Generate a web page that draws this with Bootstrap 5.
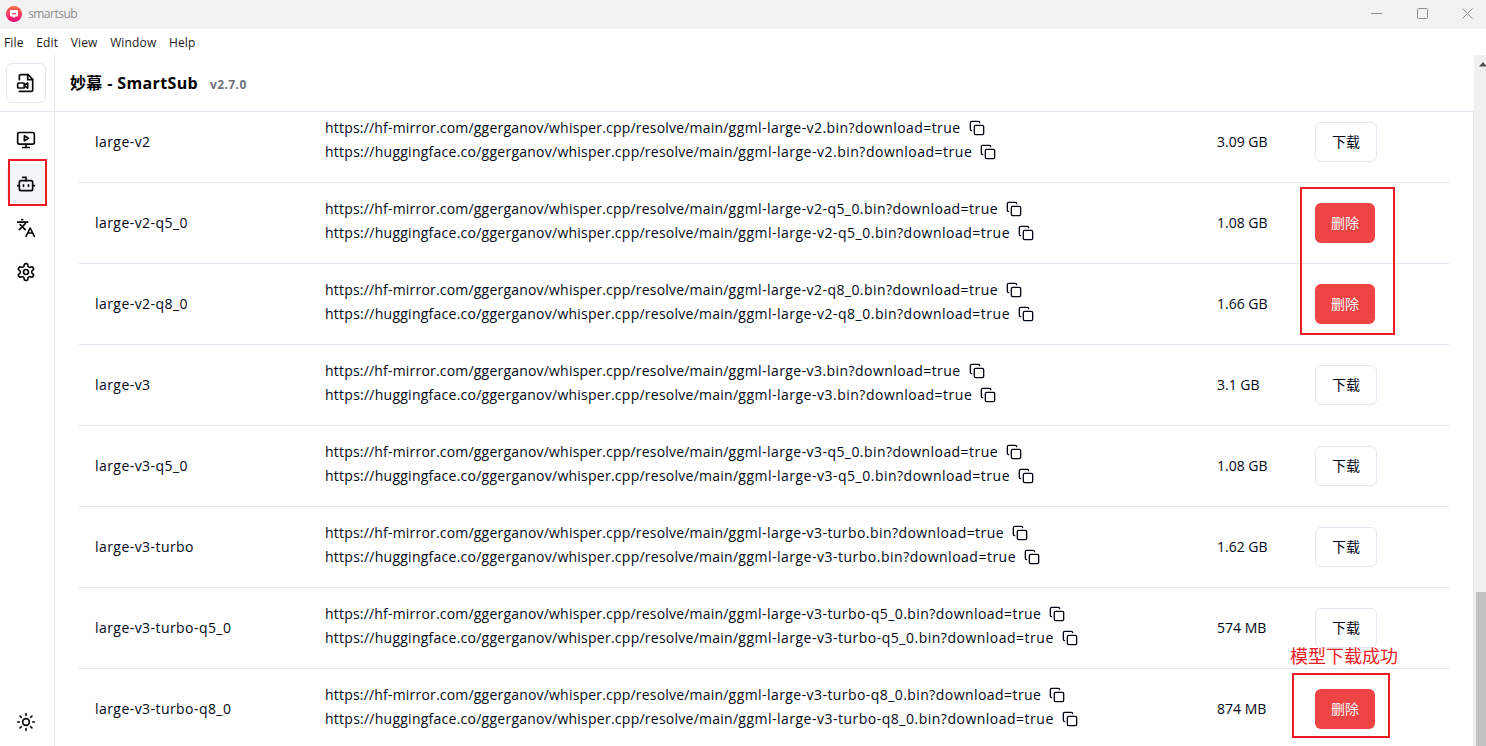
<!DOCTYPE html>
<html lang="zh">
<head>
  <meta charset="UTF-8">
  <title>smartsub</title>
  <meta name="viewport" content="width=device-width, initial-scale=1" />
  <link href="https://cdn.jsdelivr.net/npm/bootstrap@5.3.0/dist/css/bootstrap.min.css" rel="stylesheet" />
  <style>
    body {
      font-family: "Open Sans", "Noto Sans CJK SC", sans-serif;
      font-size: 14px;
      color: #020817;
    }
    svg { display: block; flex: none; }
    .lu { fill: none; stroke: currentColor; stroke-width: 2; stroke-linecap: round; stroke-linejoin: round; }
    .title-bar { height: 29px; background: #f2f2f2; color: #8c8c8c; font-size: 12px; padding: 0 0 2px 6px; }
    .title-bar .app-name { margin-left: 6px; letter-spacing: -.5px; }
    .win-group { margin-right: -4.500px; }
    .title-bar .win-btn { width: 45.500px; display: flex; justify-content: center; }
    .menu-bar { height: 26px; font-size: 12px; color: #1a1a1a; padding: 2px 0 0 4px; gap: 12.600px; letter-spacing: .15px; }
    .side-bar { width: 55px; border-right: 1px solid #e2e8f0; }
    .side-logo { height: 57px; border-bottom: 1px solid #e2e8f0; padding: 8px 8px 8px 6px; }
    .logo-btn { width: 40px; height: 40px; border: 1px solid #e2e8f0; border-radius: 6px; color: #09090b; }
    .side-btn { width: 40px; height: 40px; border-radius: 8px; color: #09090b; }
    .side-btn.current { background: #f1f5f9; }
    .side-nav { padding: 8px 0 0 6px; gap: 4px; }
    .theme-btn { margin: 0 0 4px 6px; }
    .page-head { height: 56px; padding: 2px 0 0 15px; gap: 12px; }
    .page-head h1 { font-size: 16px; letter-spacing: .36px; color: #000; }
    .page-head .version { font-size: 12px; color: #71717a; letter-spacing: .4px; padding-top: 1px; }
    .page-body { border-top: 1px solid #e2e8f0; border-right: 1px solid #e2e8f0; padding: 0 24px; }
    .model-table { margin-top: -10px; table-layout: fixed; border-collapse: separate; border-spacing: 0; line-height: 24px; }
    .model-table td { height: 81px; padding: 0 16px; border-bottom: 1px solid #e2e8f0; }
    .model-name { letter-spacing: .44px; }
    .model-url { height: 24px; letter-spacing: .195px; }
    .model-url .url-file { letter-spacing: .435px; margin-right: 8px; }
    .model-url + .model-url { letter-spacing: .25px; }
    .model-url + .model-url .url-file { letter-spacing: .5px; }
    .url-list { padding-bottom: 4px; }
    .btn-model { height: 40px; width: 60px; padding: 0 0 2px; border-radius: 6px; font-size: 14px; }
    .btn-get { width: 62px; border: 1px solid #e2e8f0; color: #020817; background: #fff; }
    .btn-del { background: #ef4444; color: #f8fafc; border: 0; }
    .scroll-track { width: 12px; background: #f0f0f0; padding-left: 2px; }
    .scroll-thumb { margin-top: 537px; background: #c1c1c1; }
    .note-box { position: absolute; border: 2px solid #ed1c24; z-index: 5; pointer-events: none; }
    .note-text { position: absolute; color: #ed1c24; font-size: 18px; line-height: 24px; z-index: 5; white-space: nowrap; }
    .note-nav { left: 8px; top: 159px; width: 39px; height: 47px; }
    .note-pair { left: 1300px; top: 187px; width: 95px; height: 148px; }
    .note-last { left: 1292px; top: 673px; width: 98px; height: 65px; }
    .note-text { left: 1290px; top: 644px; }
    .scroll-up { position: absolute; left: 1479px; top: 62px; }
  </style>
</head>
<body class="vh-100 overflow-hidden d-flex flex-column position-relative bg-white">

<!-- Window title bar -->
<div class="title-bar d-flex align-items-center flex-shrink-0">
  <svg width="16" height="16" viewBox="0 0 16 16">
    <defs><linearGradient id="g" x1="0" y1="0" x2="0" y2="1"><stop offset="0" stop-color="#ff7045"/><stop offset="1" stop-color="#f8077c"/></linearGradient></defs>
    <circle cx="8" cy="8" r="8" fill="url(#g)"/>
    <path d="M5 4h6a1 1 0 0 1 1 1v4.500a1 1 0 0 1-1 1H9.500L8 12l-1.500-1.500H5a1 1 0 0 1-1-1V5a1 1 0 0 1 1-1z" fill="#fff"/>
    <path d="M6 7.700h4" stroke="#fb3564" stroke-width="1.200"/>
  </svg>
  <span class="app-name">smartsub</span>
  <div class="ms-auto d-flex win-group">
    <div class="win-btn"><svg width="11" height="11" viewBox="0 0 11 11"><path d="M0 5.500h11" stroke="#8c8c8c"/></svg></div>
    <div class="win-btn"><svg width="11" height="11" viewBox="0 0 11 11"><rect x=".5" y=".5" width="10" height="10" rx="1" fill="none" stroke="#8c8c8c"/></svg></div>
    <div class="win-btn"><svg width="11" height="11" viewBox="0 0 11 11"><path d="M.5.5l10 10M10.500.5l-10 10" stroke="#8c8c8c"/></svg></div>
  </div>
</div>

<div class="menu-bar d-flex align-items-center flex-shrink-0">
  <span>File</span><span>Edit</span><span>View</span><span>Window</span><span>Help</span>
</div>

<div class="d-flex flex-grow-1 overflow-hidden">
  <!-- Sidebar -->
  <aside class="side-bar d-flex flex-column flex-shrink-0">
    <div class="side-logo">
      <div class="logo-btn d-flex align-items-center justify-content-center">
        <svg class="lu" width="20" height="20" viewBox="0 0 24 24"><path d="M4 8V4a2 2 0 0 1 2-2h8.500L20 7.500V20a2 2 0 0 1-2 2H4"/><path d="M14 2v6h6"/><path d="m10 15.500 4 2.500v-6l-4 2.500"/><rect width="8" height="6" x="2" y="12" rx="1"/></svg>
      </div>
    </div>
    <nav class="side-nav d-flex flex-column">
      <a class="side-btn d-flex align-items-center justify-content-center"><svg class="lu" width="20" height="20" viewBox="0 0 24 24"><path d="m10 7 5 3-5 3Z"/><rect width="20" height="14" x="2" y="3" rx="2"/><path d="M12 17v4M8 21h8"/></svg></a>
      <a class="side-btn current d-flex align-items-center justify-content-center"><svg class="lu" width="20" height="20" viewBox="0 0 24 24"><path d="M12 8V4H8"/><rect width="16" height="12" x="4" y="8" rx="2"/><path d="M2 14h2M20 14h2M15 13v2M9 13v2"/></svg></a>
      <a class="side-btn d-flex align-items-center justify-content-center"><svg class="lu" width="20" height="20" viewBox="0 0 24 24"><path d="m5 8 6 6M4 14l6-6 2-3M2 5h12M7 2h1M22 22l-5-10-5 10M14 18h6"/></svg></a>
      <a class="side-btn d-flex align-items-center justify-content-center"><svg class="lu" width="20" height="20" viewBox="0 0 24 24"><path d="M12.220 2h-.44a2 2 0 0 0-2 2v.18a2 2 0 0 1-1 1.730l-.43.25a2 2 0 0 1-2 0l-.15-.08a2 2 0 0 0-2.730.73l-.22.38a2 2 0 0 0 .73 2.730l.15.1a2 2 0 0 1 1 1.720v.51a2 2 0 0 1-1 1.740l-.15.09a2 2 0 0 0-.73 2.730l.22.38a2 2 0 0 0 2.730.73l.15-.08a2 2 0 0 1 2 0l.43.25a2 2 0 0 1 1 1.730V20a2 2 0 0 0 2 2h.44a2 2 0 0 0 2-2v-.18a2 2 0 0 1 1-1.730l.43-.25a2 2 0 0 1 2 0l.15.08a2 2 0 0 0 2.730-.73l.22-.39a2 2 0 0 0-.73-2.730l-.15-.08a2 2 0 0 1-1-1.740v-.5a2 2 0 0 1 1-1.740l.15-.09a2 2 0 0 0 .73-2.730l-.22-.38a2 2 0 0 0-2.730-.73l-.15.08a2 2 0 0 1-2 0l-.43-.25a2 2 0 0 1-1-1.730V4a2 2 0 0 0-2-2z"/><circle cx="12" cy="12" r="3"/></svg></a>
    </nav>
    <a class="side-btn theme-btn mt-auto d-flex align-items-center justify-content-center"><svg class="lu" width="20" height="20" viewBox="0 0 24 24"><circle cx="12" cy="12" r="4"/><path d="M12 2v2M12 20v2M4.930 4.930l1.410 1.410M17.660 17.660l1.410 1.410M2 12h2M20 12h2M6.340 17.660l-1.410 1.410M19.070 4.930l-1.410 1.410"/></svg></a>
  </aside>

  <!-- Models -->
  <main class="flex-grow-1 d-flex flex-column overflow-hidden">
    <header class="page-head d-flex align-items-center flex-shrink-0">
      <h1 class="fw-bold mb-0">妙幕 - SmartSub</h1>
      <span class="version fw-bold">v2.7.0</span>
    </header>
    <div class="page-body flex-grow-1 overflow-hidden">
      <table class="model-table w-100 align-middle">
        <colgroup><col style="width: 230px"><col style="width: 892px"><col style="width: 98px"><col></colgroup>
        <tbody id="modelRows"></tbody>
      </table>
    </div>
  </main>
  <div class="scroll-track d-flex flex-column flex-shrink-0"><div class="scroll-thumb flex-grow-1"></div></div>
</div>

<svg class="scroll-up" width="9" height="5" viewBox="0 0 9 5"><path d="M0 4.500 4 0l4 4.500z" fill="#505050"/></svg>

<!-- Red annotations -->
<div class="note-box note-nav"></div>
<div class="note-box note-pair"></div>
<div class="note-text">模型下载成功</div>
<div class="note-box note-last"></div>

<script src="https://cdn.jsdelivr.net/npm/bootstrap@5.3.0/dist/js/bootstrap.bundle.min.js"></script>
<script>
  const models = [
    { name: "large-v2", size: "3.09 GB", installed: false },
    { name: "large-v2-q5_0", size: "1.08 GB", installed: true },
    { name: "large-v2-q8_0", size: "1.66 GB", installed: true },
    { name: "large-v3", size: "3.1 GB", installed: false },
    { name: "large-v3-q5_0", size: "1.08 GB", installed: false },
    { name: "large-v3-turbo", size: "1.62 GB", installed: false },
    { name: "large-v3-turbo-q5_0", size: "574 MB", installed: false },
    { name: "large-v3-turbo-q8_0", size: "874 MB", installed: true }
  ];

  function urlLine(host, name) {
    return `
      <div class="model-url d-flex align-items-center">
        <span>https://${host}/ggerganov/whisper.cpp/resolve/main/<span class="url-file">ggml-${name}.bin?download=true</span></span>
        <svg class="lu" width="16" height="16" viewBox="0 0 24 24"><rect width="14" height="14" x="8" y="8" rx="2"/><path d="M4 16c-1.100 0-2-.9-2-2V4c0-1.100.9-2 2-2h10c1.100 0 2 .9 2 2"/></svg>
      </div>`;
  }

  document.getElementById("modelRows").innerHTML = models.map(m => `
    <tr>
      <td class="model-name">${m.name}</td>
      <td><div class="url-list">${urlLine("hf-mirror.com", m.name)}${urlLine("huggingface.co", m.name)}</div></td>
      <td class="text-nowrap">${m.size}</td>
      <td><button class="btn btn-model ${m.installed ? "btn-del" : "btn-get"}">${m.installed ? "删除" : "下载"}</button></td>
    </tr>`).join("");
</script>

</body>
</html>
